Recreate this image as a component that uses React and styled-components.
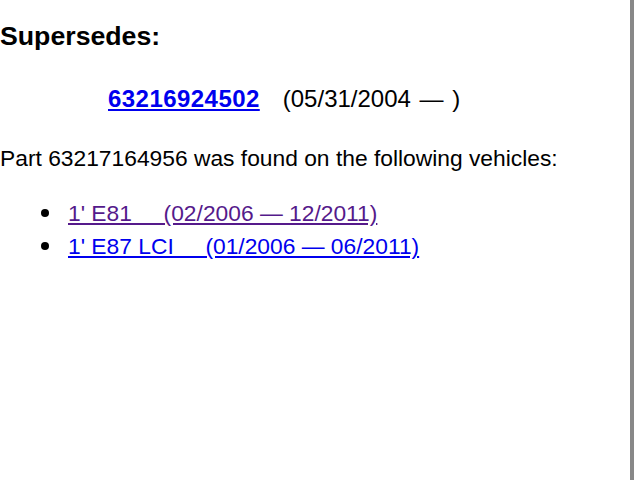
import React from "react";
import styled, { createGlobalStyle } from "styled-components";

const Global = createGlobalStyle`
  html, body { margin: 0; padding: 0; background: #ffffff; }
  body {
    font-family: "Liberation Sans", Arial, Helvetica, sans-serif;
    font-size: 22.8px;
    color: #000;
  }
`;

const Frame = styled.div`
  display: flex;
  width: 640px;
  height: 480px;
  overflow: hidden;
`;

const Page = styled.main`
  width: 630px;
  flex: none;
  background: #ffffff;
`;

const Edge = styled.div`
  width: 4px;
  flex: none;
  background: #888888;
`;

const Gutter = styled.div`
  flex: 1;
  background: #ffffff;
`;

const Heading = styled.h3`
  margin: 20px 0 0;
  font-size: 26.7px;
  line-height: 32px;
  font-weight: bold;
`;

const SupersedeRow = styled.div`
  margin-top: 31px;
  padding-left: 108px;
  display: flex;
  gap: 23px;
  font-size: 24px;
  line-height: 32px;
`;

const PartLink = styled.a`
  color: #0000ee;
  font-weight: bold;
  letter-spacing: 0.45px;
  text-decoration: underline;
`;

const Dash = styled.span`
  margin: 0 ${(p) => p.$space}px;
`;

const Para = styled.p`
  margin: 29px 0 0;
  line-height: 28px;
`;

const VehicleList = styled.ul`
  margin: 25px 0 0;
  padding: 0 0 0 41px;
  list-style: none;
`;

const Item = styled.li`
  display: flex;
  align-items: center;
  line-height: 33.3px;
`;

const Bullet = styled.span`
  width: 8px;
  height: 8px;
  border-radius: 50%;
  background: #000;
  margin: 0 19px 0 0;
  flex: none;
  position: relative;
  top: -1px;
`;

const VehicleLink = styled.a`
  color: ${(p) => (p.$visited ? "#551a8b" : "#0000ee")};
  text-decoration: underline;
  white-space: pre;
`;

const NB = "\u00a0\u00a0\u00a0\u00a0\u00a0";

const vehicles = [
  { name: "1' E81", from: "02/2006", to: "12/2011", visited: true },
  { name: "1' E87 LCI", from: "01/2006", to: "06/2011", visited: false },
];

export default function App() {
  return (
    <>
      <Global />
      <Frame>
        <Page>
          <Heading>Supersedes:</Heading>
          <SupersedeRow>
            <PartLink href="#">63216924502</PartLink>
            <span>
              (05/31/2004 <Dash $space={2}>&mdash;</Dash> )
            </span>
          </SupersedeRow>
          <Para>Part 63217164956 was found on the following vehicles:</Para>
          <VehicleList>
            {vehicles.map((v) => (
              <Item key={v.name}>
                <Bullet />
                <VehicleLink href="#" $visited={v.visited}>
                  {v.name + NB + "(" + v.from + " \u2014 " + v.to + ")"}
                </VehicleLink>
              </Item>
            ))}
          </VehicleList>
        </Page>
        <Edge />
        <Gutter />
      </Frame>
    </>
  );
}
